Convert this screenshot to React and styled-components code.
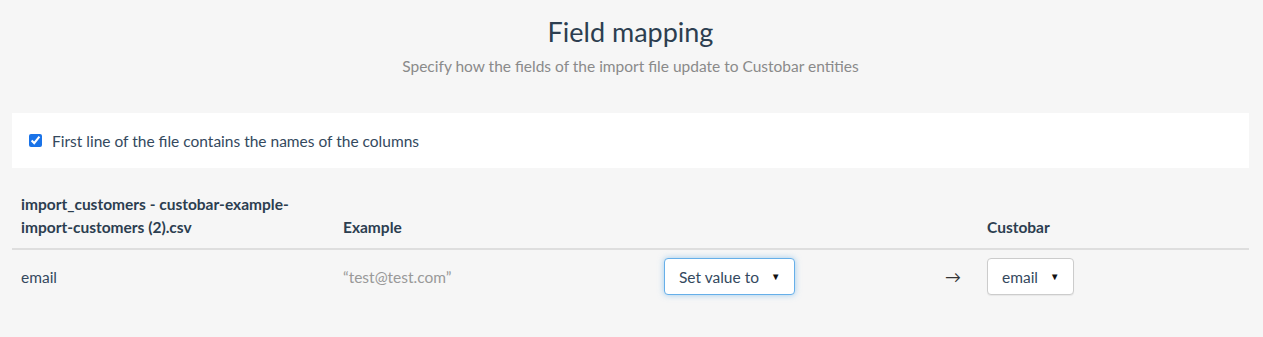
import React, { useState } from 'react';
import styled, { createGlobalStyle } from 'styled-components';

const GlobalStyle = createGlobalStyle`
  body {
    margin: 0;
    background: #f6f6f6;
    font-family: Lato, 'Open Sans', sans-serif;
    color: #34495e;
  }
`;

const Page = styled.div`
  padding: 16px 14px 20px 12px;
`;

const Header = styled.header`
  text-align: center;
`;

const Title = styled.h1`
  margin: 0;
  font-size: 27px;
  line-height: 32px;
  font-weight: 400;
  color: #2c3e50;
`;

const Subtitle = styled.p`
  margin: 8px 0 0;
  font-size: 15.5px;
  line-height: 20px;
  color: #8a8a8a;
`;

const OptionsPanel = styled.div`
  margin-top: 37px;
  background: #fff;
  height: 55px;
  display: flex;
  align-items: center;
  padding-left: 17px;
`;

const CheckLabel = styled.label`
  display: flex;
  align-items: center;
  gap: 10px;
  font-size: 15.5px;
  color: #34495e;
`;

const Checkbox = styled.input`
  width: 13px;
  height: 13px;
  margin: 0;
  accent-color: #1a73e8;
`;

const Grid = styled.div`
  margin-top: 17px;
  display: grid;
  grid-template-columns: 322px 321px 281px 42px 1fr;
`;

const HeadCell = styled.div`
  padding: 8px 9px 9px;
  font-weight: 700;
  font-size: 15.5px;
  line-height: 23px;
  color: #2c3e50;
  border-bottom: 2px solid #dedede;
  display: flex;
  align-items: flex-end;
`;

const Cell = styled.div`
  padding: 8px 9px 9px;
  font-size: 15.5px;
  line-height: 20px;
  color: ${(p) => (p.$muted ? '#999' : '#34495e')};
  display: flex;
  align-items: center;
`;

const Select = styled.button`
  height: 37px;
  padding: 0 14px;
  display: flex;
  align-items: center;
  gap: 12px;
  background: #fff;
  font-family: inherit;
  font-size: 15.5px;
  color: #34495e;
  border-radius: 4px;
  border: 1px solid ${(p) => (p.$focused ? '#66afe9' : '#ccc')};
  box-shadow: ${(p) =>
    p.$focused ? '0 0 6px rgba(102, 175, 233, 0.6)' : '0 1px 1px rgba(0,0,0,0.06)'};
  cursor: pointer;
`;

const Caret = styled.span`
  font-size: 9.5px;
  color: #111;
`;

const Arrow = styled.span`
  font-size: 16px;
  color: #333;
`;

export default function App() {
  const [firstLine, setFirstLine] = useState(true);

  return (
    <>
      <GlobalStyle />
      <Page>
        <Header>
          <Title>Field mapping</Title>
          <Subtitle>Specify how the fields of the import file update to Custobar entities</Subtitle>
        </Header>

        <OptionsPanel>
          <CheckLabel>
            <Checkbox
              type="checkbox"
              checked={firstLine}
              onChange={(e) => setFirstLine(e.target.checked)}
            />
            First line of the file contains the names of the columns
          </CheckLabel>
        </OptionsPanel>

        <Grid>
          <HeadCell>import_customers - custobar-example-import-customers (2).csv</HeadCell>
          <HeadCell>Example</HeadCell>
          <HeadCell />
          <HeadCell />
          <HeadCell>Custobar</HeadCell>

          <Cell>email</Cell>
          <Cell $muted>“test@test.com”</Cell>
          <Cell>
            <Select $focused>
              Set value to <Caret>▼</Caret>
            </Select>
          </Cell>
          <Cell>
            <Arrow>→</Arrow>
          </Cell>
          <Cell>
            <Select>
              email <Caret>▼</Caret>
            </Select>
          </Cell>
        </Grid>
      </Page>
    </>
  );
}
